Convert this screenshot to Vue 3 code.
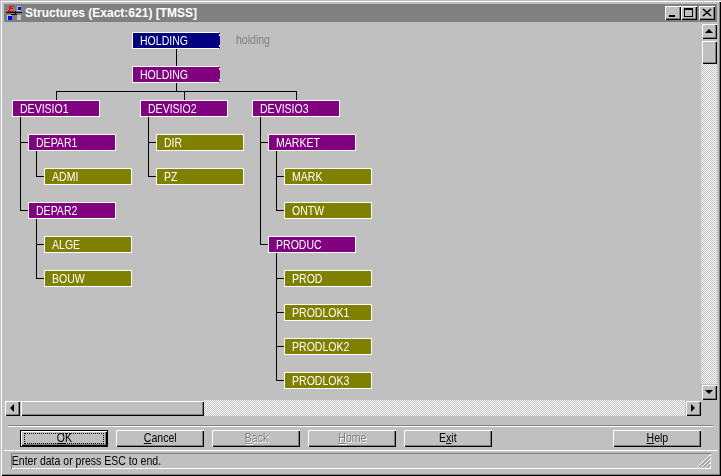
<script setup>
const nodes = [
  { t: 'HOLDING', x: 132, y: 32, c: 'navy cut' },
  { t: 'HOLDING', x: 132, y: 66, c: 'purple cut' },
  { t: 'DEVISIO1', x: 12, y: 100, c: 'purple' },
  { t: 'DEVISIO2', x: 140, y: 100, c: 'purple' },
  { t: 'DEVISIO3', x: 252, y: 100, c: 'purple' },
  { t: 'DEPAR1', x: 28, y: 134, c: 'purple' },
  { t: 'ADMI', x: 44, y: 168, c: 'olive' },
  { t: 'DEPAR2', x: 28, y: 202, c: 'purple' },
  { t: 'ALGE', x: 44, y: 236, c: 'olive' },
  { t: 'BOUW', x: 44, y: 270, c: 'olive' },
  { t: 'DIR', x: 156, y: 134, c: 'olive' },
  { t: 'PZ', x: 156, y: 168, c: 'olive' },
  { t: 'MARKET', x: 268, y: 134, c: 'purple' },
  { t: 'MARK', x: 284, y: 168, c: 'olive' },
  { t: 'ONTW', x: 284, y: 202, c: 'olive' },
  { t: 'PRODUC', x: 268, y: 236, c: 'purple' },
  { t: 'PROD', x: 284, y: 270, c: 'olive' },
  { t: 'PRODLOK1', x: 284, y: 304, c: 'olive' },
  { t: 'PRODLOK2', x: 284, y: 338, c: 'olive' },
  { t: 'PRODLOK3', x: 284, y: 372, c: 'olive' },
]
const wires = 'M172.5 27V44M172.5 61V69M52.5 69.5H292.5M52.5 69V78M180.5 69V78M292.5 69V78' +
  'M16.5 95V188.5H24M16.5 120.5H24M32.5 129V154.5H40M32.5 197V256.5H40M32.5 222.5H40' +
  'M144.5 95V154.5H152M144.5 120.5H152' +
  'M256.5 95V222.5H264M256.5 120.5H264' +
  'M272.5 129V188.5H280M272.5 154.5H280' +
  'M272.5 231V358.5H280M272.5 256.5H280M272.5 290.5H280M272.5 324.5H280'
const buttons = [
  { k: 'O', r: 'K', primary: true },
  { k: 'C', r: 'ancel' },
  { k: 'B', r: 'ack', off: true },
  { k: 'H', r: 'ome', off: true },
  { p: 'E', k: 'x', r: 'it' },
]
</script>

<template>
  <div class="window">
    <div class="titlebar">
      <svg class="appicon" width="16" height="16" viewBox="0 0 16 16" shape-rendering="crispEdges">
        <rect width="16" height="16" fill="#808080" />
        <rect x="11" y="1" width="4" height="5" fill="#c0c0c0" />
        <rect x="12" y="2" width="3" height="3" fill="#0000ff" />
        <rect x="1" y="10" width="5" height="5" fill="#c0c0c0" />
        <rect x="2" y="11" width="4" height="4" fill="#0000ff" />
        <rect x="11" y="10" width="4" height="5" fill="#c0c0c0" />
        <path d="M0 7h16v1H0zM5 9h6v1H5zM9 6h1v4H9z" fill="#000" />
        <path d="M3 1h5v1H5v1h2v1H4v2h4v1H2V5h1z" fill="#f00" />
      </svg>
      <span class="title">Structures (Exact:621) [TMSS]</span>
      <div class="caps">
        <div class="cap"><svg width="16" height="14" shape-rendering="crispEdges"><rect x="4" y="9" width="6" height="2" fill="#000" /></svg></div>
        <div class="cap"><svg width="16" height="14" shape-rendering="crispEdges"><path d="M3 2h9v9H3zM4 4v6h7V4z" fill="#000" fill-rule="evenodd" /></svg></div>
        <div class="cap close"><svg width="16" height="14"><path d="M4 3l8 7M12 3l-8 7" stroke="#000" stroke-width="1.6" /></svg></div>
      </div>
    </div>

    <div class="middle">
      <div class="canvas">
        <svg class="wires" width="697" height="378"><path :d="wires" stroke="#000" fill="none" shape-rendering="crispEdges" /></svg>
        <div
          v-for="(n, i) in nodes"
          :key="i"
          class="node"
          :class="n.c"
          :style="{ left: n.x - 4 + 'px', top: n.y - 22 + 'px' }"
        ><span class="squeeze">{{ n.t }}</span></div>
        <span class="holding squeeze">holding</span>
      </div>
      <div class="vbar">
        <div class="sbtn first"><i class="arrow up"></i></div>
        <div class="sbtn thumb-v"></div>
        <div class="track"></div>
        <div class="sbtn"><i class="arrow down"></i></div>
      </div>
    </div>

    <div class="hbar">
      <div class="sbtn"><i class="arrow left"></i></div>
      <div class="sbtn thumb-h"></div>
      <div class="track"></div>
      <div class="sbtn"><i class="arrow right"></i></div>
      <div class="corner"></div>
    </div>

    <div class="groove top-groove"></div>

    <div class="actions">
      <div
        v-for="b in buttons"
        :key="b.k"
        class="btn"
        :class="{ primary: b.primary, off: b.off }"
      ><span class="lbl">{{ b.p }}<u>{{ b.k }}</u>{{ b.r }}</span></div>
      <div class="spacer"></div>
      <div class="btn"><span class="lbl"><u>H</u>elp</span></div>
    </div>

    <div class="line"></div>

    <div class="status">
      <span class="status-text squeeze">Enter data or press ESC to end.</span>
      <svg class="grip" width="14" height="14">
        <path d="M13.5 0.5L0.5 13.5M13.5 4.5L4.5 13.5M13.5 8.5L8.5 13.5" stroke="#fff" fill="none" />
        <path d="M13.5 2L2 13.5M13.5 6L6 13.5M13.5 10L10 13.5" stroke="#808080" fill="none" />
      </svg>
    </div>
  </div>
</template>

<style scoped>
.window {
  width: 721px;
  height: 476px;
  box-sizing: border-box;
  background: #c0c0c0;
  padding: 4px;
  display: flex;
  flex-direction: column;
  font-family: "Liberation Sans", Arial, sans-serif;
  font-size: 13px;
  color: #000;
  box-shadow: inset 1px 1px 0 #c0c0c0, inset 2px 2px 0 #fff, inset -1px -1px 0 #000, inset -2px -2px 0 #808080;
}
.titlebar {
  height: 18px;
  flex: none;
  background: #808080;
  display: flex;
  align-items: center;
  padding-left: 2px;
  box-sizing: border-box;
}
.appicon { flex: none; margin-right: 3px; }
.title { color: #fff; font-weight: bold; font-size: 12px; flex: 1; }
.caps { display: flex; margin-right: 2px; }
.cap {
  width: 16px;
  height: 14px;
  background: #c0c0c0;
  box-shadow: inset 1px 1px 0 #fff, inset -1px -1px 0 #000, inset -2px -2px 0 #808080;
}
.cap svg { display: block; }
.close { margin-left: 2px; }
.middle { display: flex; height: 378px; flex: none; }
.canvas { position: relative; flex: 1; overflow: hidden; }
.wires { position: absolute; left: 0; top: 0; }
.squeeze {
  display: inline-block;
  transform: scaleX(0.81);
  transform-origin: left center;
}
.node {
  position: absolute;
  width: 88px;
  height: 17px;
  box-sizing: border-box;
  border: 1px solid #fff;
  color: #fff;
  padding-left: 7px;
  line-height: 15px;
  white-space: nowrap;
}
.cut { border-right-color: transparent; }
.cut::after {
  content: "";
  position: absolute;
  right: -1px;
  top: 1px;
  bottom: 1px;
  width: 1px;
  background: linear-gradient(#fff 2px, transparent 2px, transparent 11px, #fff 11px);
}
.navy { background: #000080; }
.purple { background: #800080; }
.olive { background: #808000; }
.holding { position: absolute; left: 232px; top: 10px; color: #808080; white-space: nowrap; }
.vbar { width: 16px; display: flex; flex-direction: column; flex: none; }
.hbar { display: flex; height: 16px; flex: none; }
.sbtn {
  flex: none;
  width: 16px;
  height: 16px;
  box-sizing: border-box;
  background: #c0c0c0;
  box-shadow: inset 1px 1px 0 #c0c0c0, inset 2px 2px 0 #fff, inset -1px -1px 0 #000, inset -2px -2px 0 #808080;
  display: flex;
  align-items: center;
  justify-content: center;
}
.first { margin-top: 1px; margin-bottom: 1px; }
.thumb-v { height: 24px; }
.thumb-h { width: 184px; }
.track {
  flex: 1;
  background-color: #fff;
  background-image: conic-gradient(#c0c0c0 25%, #fff 0 50%, #c0c0c0 0 75%, #fff 0);
  background-size: 2px 2px;
}
.corner { width: 16px; flex: none; }
.arrow { display: block; width: 0; height: 0; border-style: solid; border-color: transparent; }
.up { border-width: 0 4px 4px; border-bottom-color: #000; }
.down { border-width: 4px 4px 0; border-top-color: #000; }
.left { border-width: 4px 4px 4px 0; border-right-color: #000; }
.right { border-width: 4px 0 4px 4px; border-left-color: #000; }
.groove {
  flex: none;
  height: 2px;
  margin: 0 4px;
  background: linear-gradient(#808080 50%, #fff 50%);
}
.top-groove { margin-top: 9px; }
.line { flex: none; height: 1px; background: #fff; }
.actions {
  flex: none;
  display: flex;
  gap: 8px;
  padding: 3px 16px 3px 16px;
  height: 23px;
  box-sizing: border-box;
}
.spacer { flex: 1; }
.btn {
  width: 88px;
  height: 17px;
  box-sizing: border-box;
  background: #c0c0c0;
  box-shadow: inset 1px 1px 0 #fff, inset -1px -1px 0 #000, inset -2px -2px 0 #808080;
  text-align: center;
  line-height: 16px;
}
.lbl { display: inline-block; transform: scaleX(0.81); }
.btn.primary {
  box-shadow: inset 0 0 0 1px #000, inset 1px 1px 0 1px #fff, inset -1px -1px 0 1px #000, inset -2px -2px 0 1px #808080;
  position: relative;
}
.btn.primary::after {
  content: "";
  position: absolute;
  inset: 3px 4px 3px 4px;
  border: 1px dotted #000;
}
.btn.off { color: #808080; text-shadow: 1px 1px 0 #fff; }
.status {
  flex: none;
  height: 16px;
  margin: 2px 6px 0 7px;
  display: flex;
  position: relative;
  box-shadow: inset 1px 1px 0 #808080, inset -1px -1px 0 #fff;
}
.status-text { padding-left: 1px; line-height: 15px; white-space: nowrap; }
.grip { position: absolute; right: 0; bottom: 1px; }
</style>
